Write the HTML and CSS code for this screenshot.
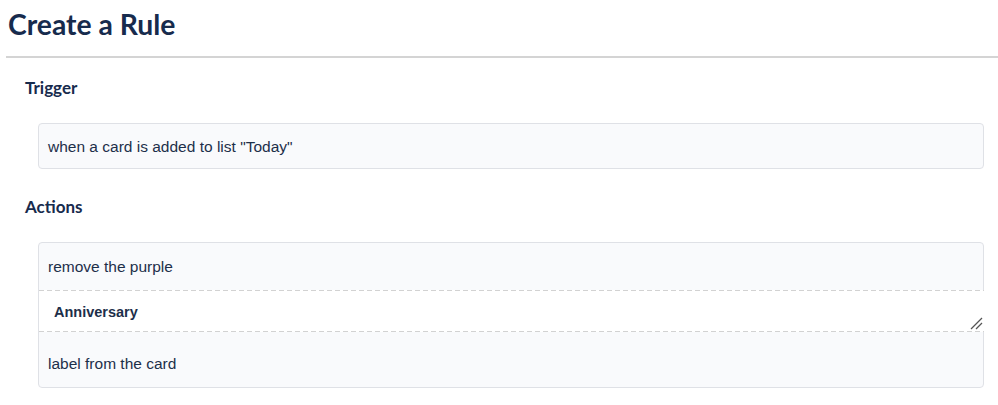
FILE: index.html
```
<!DOCTYPE html>
<html lang="en">
<head>
    <meta charset="UTF-8">
    <meta name="viewport" content="width=device-width, initial-scale=1.0">
    <title>Create a Rule</title>
    <link rel="stylesheet" href="styles.css">
</head>
<body>
    <h1 class="page-title">Create a Rule</h1>

    <div class="rule">
        <h2 class="section-title">Trigger</h2>
        <div class="box trigger">
            <div class="box-row">when a card is added to list "Today"</div>
        </div>

        <h2 class="section-title">Actions</h2>
        <div class="box action">
            <div class="box-row">remove the purple</div>
            <div class="label-field">
                Anniversary
                <svg class="resize" width="13" height="13" viewBox="0 0 13 13">
                    <line x1="1" y1="12" x2="12" y2="1" stroke="#555" stroke-width="1.2"/>
                    <line x1="6" y1="12" x2="12" y2="6" stroke="#555" stroke-width="1.2"/>
                </svg>
            </div>
            <div class="box-row last">label from the card</div>
        </div>
    </div>
</body>
</html>
```

FILE: styles.css
```
body {
    margin: 0;
    background: #fff;
    color: #172b4d;
    font-family: "Liberation Sans", Arial, sans-serif;
}
.page-title {
    font-family: Lato, sans-serif;
    font-weight: bold;
    font-size: 28.3px;
    line-height: 34px;
    margin: 7px 0 0 6px;
    padding: 0 0 15px 2px;
    border-bottom: 2px solid #d4d4d4;
}
.rule {
    padding: 20px 14px 0 25px;
}
.section-title {
    font-family: Lato, sans-serif;
    font-weight: bold;
    font-size: 17px;
    line-height: 20px;
    margin: 0 0 25px;
}
.box {
    margin-left: 13px;
    background: #f9fafc;
    border: 1px solid #dfe1e6;
    border-radius: 4px;
    font-size: 15.5px;
    color: #1d2f4a;
}
.trigger {
    margin-bottom: 28px;
}
.box-row {
    height: 44px;
    line-height: 45px;
    padding: 0 9px;
}
.action .box-row {
    height: 47px;
    line-height: 47px;
}
.action .box-row.last {
    height: 55px;
    line-height: 64px;
}
.label-field {
    position: relative;
    margin-right: -1px;
    height: 42px;
    line-height: 45px;
    padding: 0 15px;
    background:
        linear-gradient(to right, #d2d2d2 5px, transparent 5px) 0 0 / 8px 1px repeat-x,
        linear-gradient(to right, #d2d2d2 5px, transparent 5px) 0 100% / 8px 1px repeat-x,
        #fff;
    font-weight: bold;
    font-size: 14.5px;
}
.resize {
    position: absolute;
    right: 1px;
    bottom: 2px;
}
```
